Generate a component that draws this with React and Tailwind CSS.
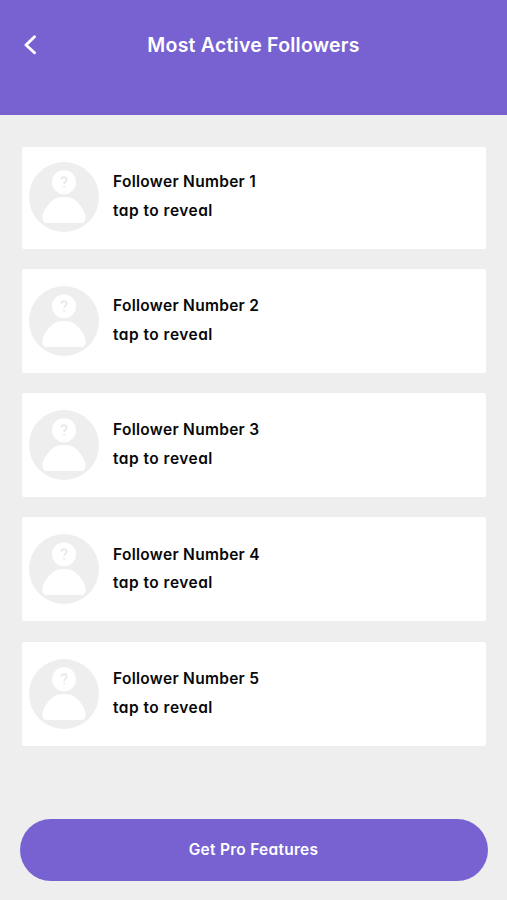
const followers = [
  'Follower Number 1',
  'Follower Number 2',
  'Follower Number 3',
  'Follower Number 4',
  'Follower Number 5',
];

function Avatar() {
  return (
    <svg viewBox="0 0 70 70" className="h-[70px] w-[70px] shrink-0" aria-hidden="true">
      <circle cx="35" cy="35" r="35" fill="#eeeeee" />
      <circle cx="35" cy="20.3" r="12" fill="#fff" />
      <path
        d="M18 61C14.500 61 13 58.500 13.500 54C14.500 48 19 42.500 24 38C28 34 42 34 46 38C51 42.500 55.500 48 56.500 54C57 58.500 55.500 61 52 61Z"
        fill="#fff"
      />
      <path
        d="M32.400 17.500C32.400 14.300 37.600 14.300 37.600 17.500C37.600 19.800 35.200 20 35.200 22M35.200 23.800V25.400"
        fill="none"
        stroke="#e9e9e9"
        strokeWidth="1.8"
      />
    </svg>
  );
}

function FollowerCard({ name }) {
  return (
    <li className="flex h-[104px] items-center rounded-[2px] bg-white pl-[7px] first:h-[102px] first:pb-[2px]">
      <Avatar />
      <div className="ml-[14px] text-[15.5px] leading-[28.8px] font-semibold whitespace-nowrap text-[#080808]">
        <p className="tracking-[0.3px]">{name}</p>
        <p className="tracking-[0.48px]">tap to reveal</p>
      </div>
    </li>
  );
}

export default function App() {
  return (
    <main className="flex h-[900px] w-full flex-col bg-[#eeeeee] font-['Inter',sans-serif] [font-feature-settings:'cv11']">
      <header className="grid h-[115px] shrink-0 grid-cols-[60px_1fr_60px] items-start bg-[#7862d2] pt-[30px] text-white">
        <button aria-label="Back" className="flex h-[30px] items-center pl-[24px]">
          <svg viewBox="0 0 13 20" className="h-5 w-[13px]" fill="none" stroke="currentColor" strokeWidth="2.9" strokeLinecap="round" strokeLinejoin="round">
            <path d="M10.500 1.800 2 10l8.500 7.800" />
          </svg>
        </button>
        <h1 className="text-center text-[19.5px] leading-[30px] font-semibold tracking-[0.22px] whitespace-nowrap">
          Most Active Followers
        </h1>
      </header>
      <ul className="mt-[31.6px] mr-[21px] ml-[22px] flex flex-col gap-[20.3px]">
        {followers.map((name) => (
          <FollowerCard key={name} name={name} />
        ))}
      </ul>
      <button className="mx-auto mt-auto mb-[19px] h-[62px] w-[468px] shrink-0 rounded-full bg-[#7862d2] text-[15.5px] font-semibold tracking-[0.27px] text-white">
        Get Pro Features
      </button>
    </main>
  );
}
